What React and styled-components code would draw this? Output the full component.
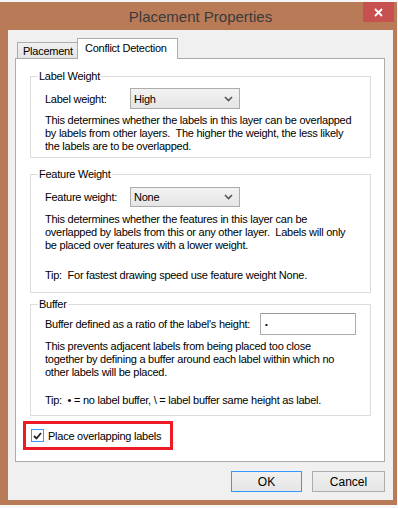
import styled, { createGlobalStyle } from 'styled-components';

const GlobalStyle = createGlobalStyle`
  html, body {
    margin: 0;
    padding: 0;
    background: #f7f7f7;
  }
  body {
    font-family: "Liberation Sans", Arial, sans-serif;
    color: #000;
  }
`;

const Window = styled.div`
  box-sizing: border-box;
  margin-top: 2px;
  width: 397px;
  height: 503px;
  padding: 0 4px 5px 8px;
  background: #b97a58;
  display: flex;
  flex-direction: column;
`;

const TitleBar = styled.div`
  position: relative;
  height: 29px;
  display: flex;
  align-items: center;
  justify-content: center;
  font-size: 15px;
  color: #3a3a3a;
  padding-top: 1px;
  box-sizing: border-box;
`;

const CloseButton = styled.div`
  position: absolute;
  top: 0;
  right: -1px;
  width: 31px;
  height: 20px;
  background: #c75050;
  display: flex;
  align-items: center;
  justify-content: center;
`;

const Client = styled.div`
  flex: 1;
  background: #f0f0f0;
  padding: 8px 8px 8px 7px;
  display: flex;
  flex-direction: column;
  font-size: 11px;
  letter-spacing: -0.25px;
`;

const TabStrip = styled.div`
  display: flex;
  align-items: flex-end;
  height: 21px;
  padding-left: 2px;
  margin-bottom: -1px;
  position: relative;
  z-index: 1;
`;

const Tab = styled.div`
  box-sizing: border-box;
  width: ${(p) => p.$w}px;
  height: ${(p) => (p.$active ? 21 : 16)}px;
  margin-bottom: ${(p) => (p.$active ? 0 : 1)}px;
  border: 1px solid #acacac;
  border-bottom: none;
  background: ${(p) => (p.$active ? '#fff' : 'linear-gradient(#f0f0f0, #e5e5e5)')};
  display: flex;
  align-items: ${(p) => (p.$active ? 'flex-start' : 'center')};
  padding-top: ${(p) => (p.$active ? 3 : 0)}px;
  padding-left: ${(p) => (p.$active ? 7 : 5)}px;
  white-space: nowrap;
  & + & {
    margin-left: -1px;
  }
`;

const Panel = styled.div`
  box-sizing: border-box;
  height: 404px;
  background: #fff;
  border: 1px solid #acacac;
  padding: 17px 13px 0 14px;
  display: flex;
  flex-direction: column;
`;

const GroupBox = styled.div`
  position: relative;
  border: 1px solid #dcdcdc;
  margin-top: ${(p) => p.$mt || 0}px;
  padding: ${(p) => p.$pt}px 14px ${(p) => p.$pb}px 14px;
`;

const Caption = styled.div`
  position: absolute;
  top: -7px;
  left: 7px;
  padding: 0 1px;
  line-height: 13px;
  background: #fff;
  white-space: nowrap;
`;

const FieldRow = styled.div`
  display: flex;
  align-items: center;
`;

const FieldLabel = styled.div`
  width: ${(p) => p.$w}px;
  white-space: nowrap;
`;

const Select = styled.div`
  box-sizing: border-box;
  width: 110px;
  height: ${(p) => p.$h}px;
  border: 1px solid #acacac;
  background: linear-gradient(#f2f2f2, #e5e5e5);
  display: flex;
  align-items: center;
  justify-content: space-between;
  padding: 0 6px 0 3px;
`;

const TextBox = styled.div`
  box-sizing: border-box;
  width: 98px;
  height: 22px;
  border: 1px solid #abadb3;
  border-top-color: #9a9a9a;
  background: #fff;
  display: flex;
  align-items: center;
  padding-left: 4px;
  font-size: 8px;
`;

const Para = styled.div`
  margin-top: ${(p) => p.$mt}px;
  line-height: 13px;
`;

const Line = styled.div`
  white-space: nowrap;
`;

const Highlight = styled.div`
  box-sizing: border-box;
  margin: 5px 0 0 -7px;
  width: 150px;
  height: 29px;
  border: 3px solid #ed1c24;
  display: flex;
  align-items: center;
  padding-left: 5px;
  gap: 4px;
`;

const CheckBox = styled.div`
  box-sizing: border-box;
  width: 13px;
  height: 13px;
  border: 1px solid #3399ff;
  background: #fff;
  display: flex;
  align-items: center;
  justify-content: center;
`;

const ButtonRow = styled.div`
  display: flex;
  justify-content: flex-end;
  gap: 10px;
  margin-top: 9px;
`;

const Button = styled.div`
  box-sizing: border-box;
  width: ${(p) => p.$w}px;
  height: 21px;
  border: 1px solid ${(p) => (p.$default ? '#3399ff' : '#acacac')};
  background: linear-gradient(#f0f0f0, #e5e5e5);
  display: flex;
  align-items: center;
  justify-content: center;
  font-size: 12px;
  letter-spacing: 0;
`;

const Chevron = () => (
  <svg width="9" height="6" viewBox="0 0 9 6">
    <polyline points="1,1 4.5,4.5 8,1" fill="none" stroke="#555" strokeWidth="1.6" />
  </svg>
);

const App = () => {
  return (
    <>
      <GlobalStyle />
      <Window>
        <TitleBar>
          Placement Properties
          <CloseButton>
            <svg width="9" height="9" viewBox="0 0 9 9">
              <path d="M1 1L8 8M8 1L1 8" stroke="#fff" strokeWidth="1.8" />
            </svg>
          </CloseButton>
        </TitleBar>
        <Client>
          <TabStrip>
            <Tab $w={61}>Placement</Tab>
            <Tab $w={101} $active>Conflict Detection</Tab>
          </TabStrip>
          <Panel>
            <GroupBox $pt={11} $pb={4}>
              <Caption>Label Weight</Caption>
              <FieldRow>
                <FieldLabel $w={85}>Label weight:</FieldLabel>
                <Select $h={21}>
                  High
                  <Chevron />
                </Select>
              </FieldRow>
              <Para $mt={5}>
                <Line>This determines whether the labels in this layer can be overlapped</Line>
                <Line>by labels from other layers.&nbsp; The higher the weight, the less likely</Line>
                <Line>the labels are to be overlapped.</Line>
              </Para>
            </GroupBox>

            <GroupBox $mt={16} $pt={12} $pb={10}>
              <Caption>Feature Weight</Caption>
              <FieldRow>
                <FieldLabel $w={85}>Feature weight:</FieldLabel>
                <Select $h={20}>
                  None
                  <Chevron />
                </Select>
              </FieldRow>
              <Para $mt={6}>
                <Line>This determines whether the features in this layer can be</Line>
                <Line>overlapped by labels from this or any other layer.&nbsp; Labels will only</Line>
                <Line>be placed over features with a lower weight.</Line>
              </Para>
              <Para $mt={17}>
                <Line>Tip:&nbsp; For fastest drawing speed use feature weight None.</Line>
              </Para>
            </GroupBox>

            <GroupBox $mt={11} $pt={8} $pb={8}>
              <Caption>Buffer</Caption>
              <FieldRow>
                <FieldLabel $w={220}>Buffer defined as a ratio of the label's height:</FieldLabel>
                <TextBox>•</TextBox>
              </FieldRow>
              <Para $mt={5}>
                <Line>This prevents adjacent labels from being placed too close</Line>
                <Line>together by defining a buffer around each label within which no</Line>
                <Line>other labels will be placed.</Line>
              </Para>
              <Para $mt={15}>
                <Line>Tip:&nbsp; • = no label buffer, \ = label buffer same height as label.</Line>
              </Para>
            </GroupBox>

            <Highlight>
              <CheckBox>
                <svg width="9" height="8" viewBox="0 0 9 8">
                  <polyline points="1,4 3.5,6.5 8,1" fill="none" stroke="#222" strokeWidth="1.8" />
                </svg>
              </CheckBox>
              <span>Place overlapping labels</span>
            </Highlight>
          </Panel>
          <ButtonRow>
            <Button $w={71} $default>OK</Button>
            <Button $w={73}>Cancel</Button>
          </ButtonRow>
        </Client>
      </Window>
    </>
  );
};

export default App;
